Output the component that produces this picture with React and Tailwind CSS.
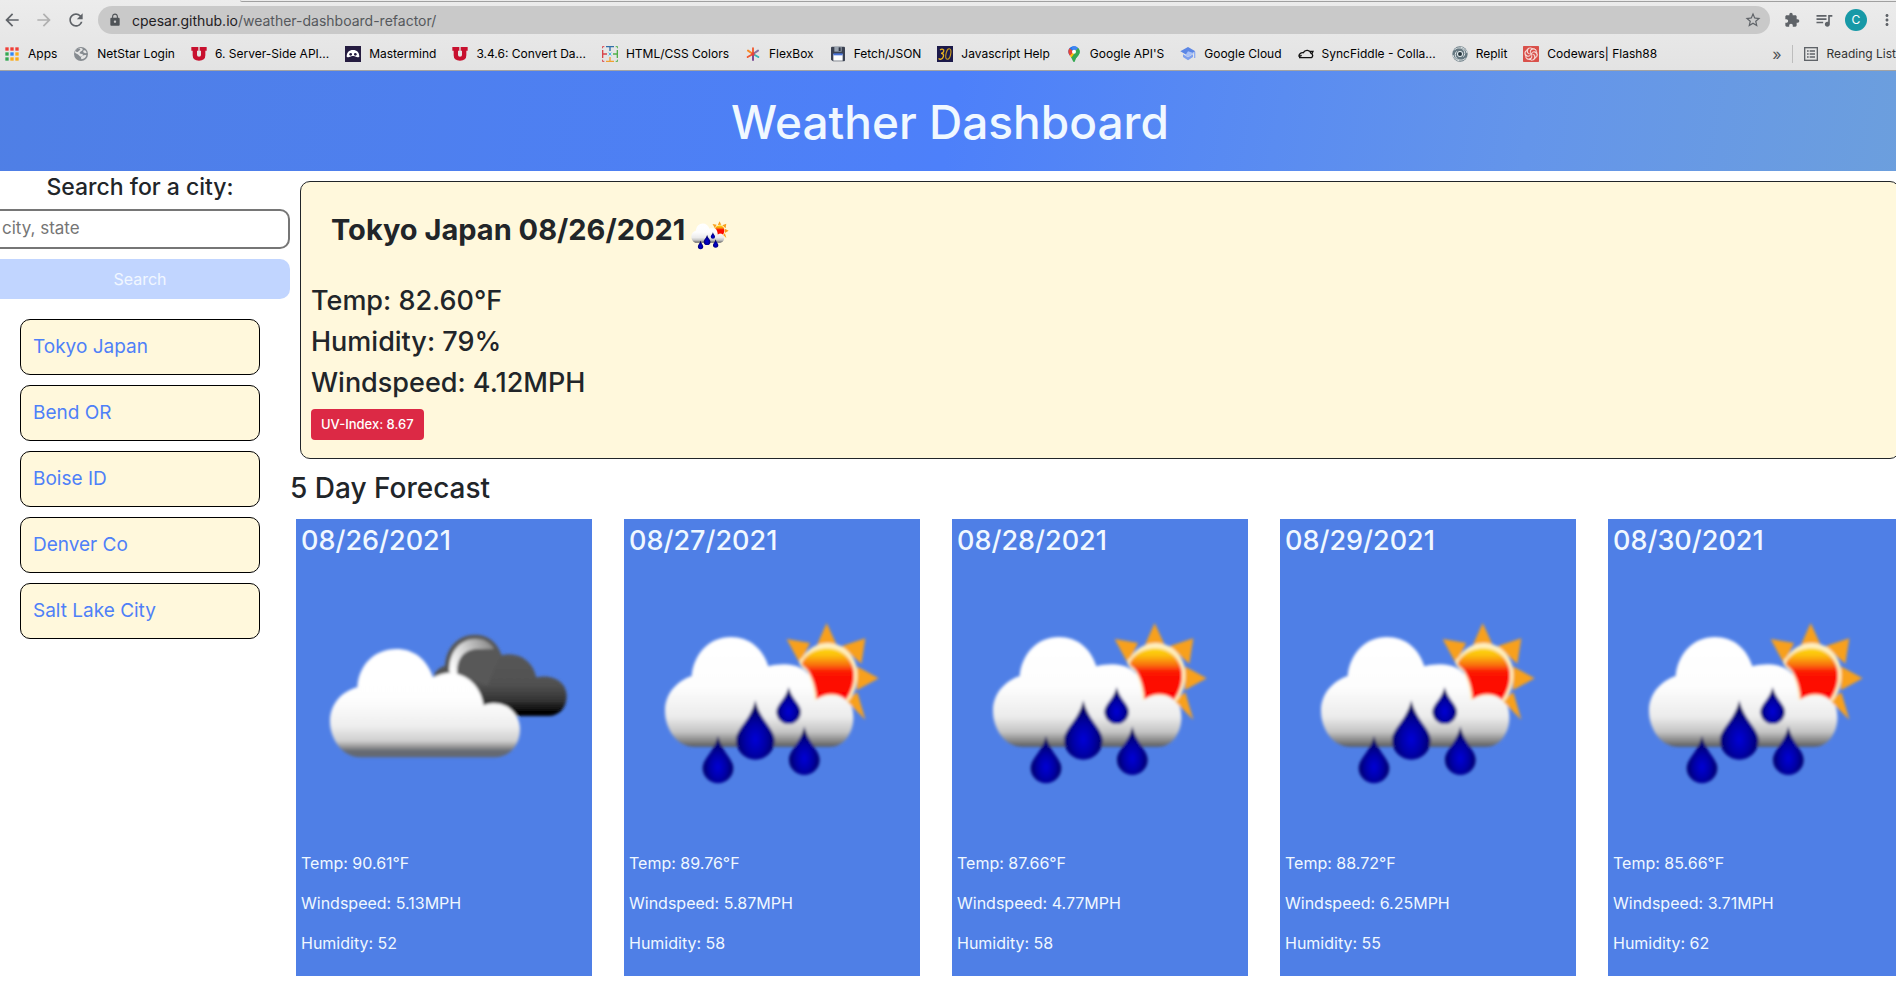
import { useId } from "react";
import {
  MdArrowBack,
  MdArrowForward,
  MdRefresh,
  MdLock,
  MdStarBorder,
  MdExtension,
  MdQueueMusic,
  MdMoreVert,
} from "react-icons/md";
import { SiCodewars } from "react-icons/si";

const Icon = ({ children, box = "0 0 48 48" }) => (
  <svg viewBox={box} className="size-4 shrink-0" aria-hidden="true">
    {children}
  </svg>
);

const APP_DOTS = ["#ef3e36", "#ef3e36", "#ef3e36", "#34a853", "#2f86f6", "#fbab17", "#34a853", "#fbab17", "#fbab17"];

const AppsIcon = () => (
  <Icon>
    {APP_DOTS.map((c, i) => (
      <rect key={i} x={4 + (i % 3) * 15} y={4 + Math.floor(i / 3) * 15} width="10" height="10" fill={c} />
    ))}
  </Icon>
);

const GlobeIcon = () => (
  <Icon>
    <circle cx="24" cy="24" r="21" fill="#868b90" />
    <path d="M24 6c6 1 7 5 3 8s-6 2-7 6 6 2 9 5-2 7-6 7-4-5-9-7-7-3-8-6C7 11 16 6 24 6z" fill="#e6e6e6" />
    <path d="M33 13c4-1 7 3 8 8-4 1-9 0-10-3s0-4 2-5zM27 30c5-2 9-4 13-2-1 6-7 11-14 12-3-2-3-8 1-10z" fill="#e6e6e6" />
    <path d="M13 9c4-2 8-2 9 0s-4 6-7 8-6 0-7-1 2-5 5-7z" fill="#868b90" />
  </Icon>
);

const UtahIcon = () => (
  <Icon>
    <path
      d="M1 3h21v11h-4v13q0 5 6 5t6-5V14h-4V3h21v11h-4v14q0 16-19 16T5 28V14H1z"
      fill="#c8102e"
    />
  </Icon>
);

const MastermindIcon = () => (
  <Icon>
    <rect width="48" height="48" fill="#251c40" />
    <path d="M5 32C5 19 12 12 24 12s19 7 19 20c-4 3-11 1-14-1-3-1-7-1-10 0-3 2-10 4-14 1z" fill="#fff" />
    <circle cx="17" cy="25" r="4" fill="#251c40" />
    <circle cx="31" cy="25" r="4" fill="#251c40" />
  </Icon>
);

const ColorsIcon = () => (
  <Icon>
    <g fill="none" strokeWidth="3">
      <path d="M12 2h24M24 2v13" stroke="#2f6ea8" strokeWidth="4" />
      <path d="M12 46h24M24 46V33" stroke="#f0a030" strokeWidth="4" />
      <path d="M2 12v24M2 24h13" stroke="#d8434a" strokeWidth="4" />
      <path d="M46 12v24M46 24H33" stroke="#4fb04a" strokeWidth="4" />
      <path d="M1 7V2h6M1 41v5h6" stroke="#d8434a" />
      <path d="M41 2h6v5M41 46h6v-5" stroke="#4fb04a" />
    </g>
    <path d="M21 21h6v6h-6z" fill="#49b9e8" />
    <path d="M18 18h3v3h-3zM27 18h3v3h-3zM18 27h3v3h-3zM27 27h3v3h-3z" fill="#9fd7ef" />
  </Icon>
);

const FlexIcon = () => (
  <Icon>
    <g strokeWidth="6" strokeLinecap="round">
      <path d="M24 24V7" stroke="#f0643c" />
      <path d="M24 24 9 14" stroke="#f58a28" />
      <path d="M24 24 39 14" stroke="#8a72a0" />
      <path d="M24 24 8 33" stroke="#f05a32" />
      <path d="M24 24 40 33" stroke="#35b5b8" />
      <path d="M24 24v18" stroke="#7b4c94" />
    </g>
    <circle cx="24" cy="24" r="5" fill="#e8413c" />
  </Icon>
);

const FloppyIcon = () => (
  <Icon>
    <path d="M3 5q0-3 3-3h36q3 0 3 3v38q0 3-3 3H9l-6-5z" fill="#3b4252" />
    <path d="M13 2h22v15H13z" fill="#9aa4b0" />
    <path d="M26 4h6v11h-6z" fill="#303747" />
    <path d="M10 24h28v20H10z" fill="#fff" />
    <path d="M10 22h28v6H10z" fill="#4a74d8" />
  </Icon>
);

const ThirtyIcon = () => (
  <Icon>
    <rect width="48" height="48" fill="#1c1a4a" />
    <path
      d="M9 12c6-5 13-2 11 4-1 4-5 6-8 6 6 0 9 4 7 10-2 8-11 10-14 5"
      fill="none"
      stroke="#e7b321"
      strokeWidth="4"
    />
    <ellipse cx="34" cy="24" rx="7" ry="16" transform="rotate(12 34 24)" fill="none" stroke="#c99a1e" strokeWidth="3.5" />
  </Icon>
);

const PinIcon = () => (
  <Icon>
    <path d="M24 1c4 0 8 1 11 4L12 29C9 25 7 21 7 17 7 8 14 1 24 1z" fill="#1a73e8" />
    <path d="M11 7 23 17 12 29C9 25 7 21 7 17c0-4 1-7 4-10z" fill="#ea4335" />
    <path d="M35 5c4 3 6 7 6 12 0 12-13 16-14 28-1 3-5 3-6 0-1-6-4-9-7-13z" fill="#34a853" />
    <path d="m12 29 18-21 3 14-17 13z" fill="#fbbc04" />
    <path d="m22 27 13-22c4 3 6 7 6 12 0 12-13 16-14 28-1 3-5 3-6 0-1-4-3-7-5-10z" fill="#34a853" />
    <path d="M20 2c6-2 12 0 16 4l-8 8-12-5z" fill="#4285f4" />
    <circle cx="24" cy="17" r="6" fill="#fff" />
  </Icon>
);

const CloudAcademyIcon = () => (
  <Icon>
    <path d="m24 3 22 13-22 13L1 16z" fill="#5b86e5" />
    <path d="m9 25 15 9 15-9v8l-15 10L9 33z" fill="#7ea0ee" />
    <path d="M42 18h4v18h-4z" fill="#8fadf2" />
    <path d="m24 16 18 6-18 11-8-5z" fill="#a9c1f7" />
  </Icon>
);

const SyncIcon = () => (
  <Icon>
    <path
      d="M37 16h8l-3 6M8 35h32c6-3 5-11-1-13C36 12 22 9 16 20 8 19 2 25 3 32M3 32l8-4M3 35h9"
      fill="none"
      stroke="#111"
      strokeWidth="4"
    />
  </Icon>
);

const ReplitIcon = () => (
  <Icon>
    <circle cx="24" cy="24" r="23" fill="#667881" />
    <g fill="none" stroke="#dfe5e7" strokeWidth="3">
      <path d="M6 13c7-9 22-10 29-1 5 7 4 15-1 20" />
      <path d="M42 35c-7 9-22 10-29 1-5-7-4-15 1-20" />
      <path d="M3 27c2 9 9 16 19 17M45 21C43 12 36 5 26 4" />
    </g>
    <circle cx="24" cy="24" r="8" fill="none" stroke="#dfe5e7" strokeWidth="3" />
    <circle cx="24" cy="24" r="5" fill="#26343b" />
  </Icon>
);

const CodewarsIcon = () => (
  <span className="size-4 shrink-0 bg-[#f6dedb] text-[#d9504a]">
    <SiCodewars className="size-4" />
  </span>
);

const ListIcon = () => (
  <Icon>
    <rect x="5" y="5" width="38" height="38" fill="none" stroke="#5f6368" strokeWidth="4" />
    <path d="M12 15h5M20 15h16M12 24h5M20 24h16M12 33h5M20 33h16" stroke="#5f6368" strokeWidth="4" />
  </Icon>
);

const BOOKMARKS = [
  ["Apps", AppsIcon],
  ["NetStar Login", GlobeIcon],
  ["6. Server-Side API...", UtahIcon],
  ["Mastermind", MastermindIcon],
  ["3.4.6: Convert Da...", UtahIcon],
  ["HTML/CSS Colors", ColorsIcon],
  ["FlexBox", FlexIcon],
  ["Fetch/JSON", FloppyIcon],
  ["Javascript Help", ThirtyIcon],
  ["Google API'S", PinIcon],
  ["Google Cloud", CloudAcademyIcon],
  ["SyncFiddle - Colla...", SyncIcon],
  ["Replit", ReplitIcon],
  ["Codewars| Flash88", CodewarsIcon],
];

function CloudsIcon({ className }) {
  const id = useId();
  return (
    <svg viewBox="33 168 858 858" className={className} role="img" aria-label="Broken clouds">
      <defs>
        <linearGradient id={id + "w"} gradientUnits="userSpaceOnUse" x1="0" y1="420" x2="0" y2="748">
          <stop offset="0" stopColor="#fff" />
          <stop offset=".45" stopColor="#fefefe" />
          <stop offset=".7" stopColor="#efefef" />
          <stop offset=".84" stopColor="#cfcfcf" />
          <stop offset=".9" stopColor="#909090" />
          <stop offset=".93" stopColor="#666b74" />
          <stop offset="1" stopColor="#62666e" />
        </linearGradient>
        <linearGradient id={id + "d"} gradientUnits="userSpaceOnUse" x1="0" y1="380" x2="0" y2="625">
          <stop offset="0" stopColor="#5a5a5a" />
          <stop offset=".6" stopColor="#505050" />
          <stop offset=".8" stopColor="#333" />
          <stop offset=".92" stopColor="#050505" />
          <stop offset="1" stopColor="#000" />
        </linearGradient>
        <linearGradient id={id + "r"} gradientUnits="userSpaceOnUse" x1="480" y1="480" x2="630" y2="410">
          <stop offset="0" stopColor="#fff" />
          <stop offset=".4" stopColor="#d0d0d0" />
          <stop offset="1" stopColor="#777" />
        </linearGradient>
        <filter id={id + "b"} x="-10%" y="-10%" width="120%" height="120%">
          <feGaussianBlur stdDeviation="5" />
        </filter>
      </defs>
      <g filter={`url(#${id}b)`}>
        <path
          d="M432 505C432 490 445 476 465 470 468 415 505 377 555 377c38 0 67 22 80 62 45-12 92 12 104 66 44-10 91 10 91 56 0 36-22 60-55 60H640L520 560z"
          fill={`url(#${id}d)`}
        />
        <path
          d="M478 490c-3-60 32-100 78-100 26 0 43 9 56 30-50 0-70-2-90 18-18 18-22 36-20 60z"
          fill={`url(#${id}r)`}
        />
        <path d="M503 498c-8-50 22-80 66-78 30 2 56 8 64 16l-40 94z" fill="#585858" />
        <path
          d="M210 745c-50 0-90-52-90-108 0-50 34-90 82-102 4-66 50-115 117-115 52 0 92 30 110 85 20-10 44-18 66-12 46 10 78 45 86 96 60-22 109 20 109 72 0 50-34 84-74 84z"
          fill={`url(#${id}w)`}
        />
      </g>
    </svg>
  );
}

const DROPS = [
  [404, 574, 752, 58],
  [504, 534, 645, 37],
  [292, 680, 823, 46],
  [551, 652, 798, 46],
];

// A drop with its tip at `top`, its round end at `bottom` and half-width r.
function dropPath([x, top, bottom, r]) {
  const cy = bottom - r;
  return `M${x} ${top}C${x + r * 0.25} ${top + (cy - top) * 0.5} ${x + r} ${cy - r * 0.6} ${x + r} ${cy}A${r} ${r} 0 0 1 ${x - r} ${cy}C${x - r} ${cy - r * 0.6} ${x - r * 0.25} ${top + (cy - top) * 0.5} ${x} ${top}z`;
}

function RainIcon({ className }) {
  const id = useId();
  return (
    <svg viewBox="25 168 858 858" className={className} role="img" aria-label="Rain with sun">
      <defs>
        <linearGradient id={id + "w"} gradientUnits="userSpaceOnUse" x1="0" y1="385" x2="0" y2="715">
          <stop offset="0" stopColor="#fff" />
          <stop offset=".45" stopColor="#fdfdfd" />
          <stop offset=".72" stopColor="#ececec" />
          <stop offset=".86" stopColor="#c4c4c4" />
          <stop offset=".95" stopColor="#808080" />
          <stop offset="1" stopColor="#555" />
        </linearGradient>
        <linearGradient id={id + "s"} gradientUnits="userSpaceOnUse" x1="0" y1="420" x2="0" y2="575">
          <stop offset="0" stopColor="#fdd40c" />
          <stop offset=".12" stopColor="#fcc010" />
          <stop offset=".32" stopColor="#f86a10" />
          <stop offset=".44" stopColor="#fc1404" />
          <stop offset="1" stopColor="#fe0000" />
        </linearGradient>
        <radialGradient id={id + "d"} cx=".5" cy=".66" r=".55">
          <stop offset="0" stopColor="#0202d8" />
          <stop offset=".5" stopColor="#0000a4" />
          <stop offset="1" stopColor="#02005a" />
        </radialGradient>
        <filter id={id + "b"} x="-10%" y="-10%" width="120%" height="120%">
          <feGaussianBlur stdDeviation="5" />
        </filter>
      </defs>
      <g filter={`url(#${id}b)`}>
        <path
          d="M220 713c-50 0-87-52-87-108 0-50 34-88 80-104 6-66 52-117 118-117 54 0 96 34 112 88 60-14 108-4 132 40l60 40c50 2 65 40 63 80-3 48-34 81-68 81z"
          fill={`url(#${id}w)`}
        />
        <g fill="#f8a01c">
          <path d="M618 342 648 408H589z" />
          <path d="M498 390 568 402 538 464z" />
          <path d="M734 388 722 464 662 412z" />
          <path d="M774 508 708 544V472z" />
          <path d="M734 632 676 574 710 550z" />
        </g>
        <path
          d="M560 488C534 470 530 455 545 446 565 415 592 402 622 402c50 0 88 42 88 94 0 34-10 62-28 82-30-26-70-20-100-4-2-34-10-62-22-86z"
          fill="#fff0c0"
        />
        <path
          d="M562 484c-10-12-22-14-18-24 14-28 44-42 76-42 46 0 80 36 80 80 0 30-10 54-24 74-28-22-60-20-88-2-2-34-12-62-26-86z"
          fill={`url(#${id}s)`}
        />
        {DROPS.map((d) => (
          <path key={d[0]} d={dropPath(d)} fill={`url(#${id}d)`} />
        ))}
      </g>
    </svg>
  );
}

const CITIES = ["Tokyo Japan", "Bend OR", "Boise ID", "Denver Co", "Salt Lake City"];

const FORECAST = [
  { date: "08/26/2021", Art: CloudsIcon, temp: "90.61", wind: "5.13", humidity: 52 },
  { date: "08/27/2021", Art: RainIcon, temp: "89.76", wind: "5.87", humidity: 58 },
  { date: "08/28/2021", Art: RainIcon, temp: "87.66", wind: "4.77", humidity: 58 },
  { date: "08/29/2021", Art: RainIcon, temp: "88.72", wind: "6.25", humidity: 55 },
  { date: "08/30/2021", Art: RainIcon, temp: "85.66", wind: "3.71", humidity: 62 },
];

function BrowserBar() {
  return (
    <div className="border-b border-[#a3a3a3] bg-linear-to-b from-[#ececec] to-[#e3e3e3] text-[#5f6368]">
      <div className="ml-60 h-0.5 rounded-bl border-b border-[#a0a0a0]" />
      <div className="flex h-9 items-center">
        <button aria-label="Back" className="-ml-1 flex w-8 shrink-0 justify-center">
          <MdArrowBack className="size-5" />
        </button>
        <button aria-label="Forward" className="flex w-8 shrink-0 justify-center text-[#b0b0b0]">
          <MdArrowForward className="size-5" />
        </button>
        <button aria-label="Reload" className="flex w-8 shrink-0 justify-center">
          <MdRefresh className="size-5" />
        </button>
        <div className="ml-1.5 flex h-7 flex-1 items-center rounded-full bg-[#c9c9c9] pr-2 pl-2.5 text-[14px]">
          <MdLock className="size-3.5 text-[#4f5357]" />
          <label htmlFor="address" className="ml-2.5 text-[#1f2023]">
            cpesar.github.io
          </label>
          <input
            id="address"
            className="min-w-0 flex-1 bg-transparent text-[#55585c] outline-none"
            defaultValue="/weather-dashboard-refactor/"
          />
          <button aria-label="Bookmark this page">
            <MdStarBorder className="size-[18px]" />
          </button>
        </div>
        <div className="flex items-center pl-1.5">
          <button aria-label="Extensions" className="flex w-8 justify-center">
            <MdExtension className="size-4" />
          </button>
          <button aria-label="Media" className="flex w-8 justify-center">
            <MdQueueMusic className="size-5" />
          </button>
          <button aria-label="Profile" className="flex w-8 justify-center">
            <span className="flex size-[22px] items-center justify-center rounded-full bg-[#1799a7] text-[12px] text-white">
              C
            </span>
          </button>
          <button aria-label="Menu" className="flex w-6 justify-end">
            <MdMoreVert className="size-[18px]" />
          </button>
        </div>
      </div>
      <nav aria-label="Bookmarks" className="flex h-8 items-center gap-4 pl-1 text-[12px] whitespace-nowrap text-black">
        {BOOKMARKS.map(([label, Art]) => (
          <a key={label} href="#" className="flex items-center gap-2">
            <Art />
            {label}
          </a>
        ))}
        <div className="ml-auto flex items-center">
          <button aria-label="More bookmarks" className="mr-2.5 text-[16px] text-[#4f5357]">
            »
          </button>
          <a href="#" className="flex items-center gap-2 border-l border-[#bdbdbd] pl-2.5 text-[#333]">
            <ListIcon />
            Reading List
          </a>
        </div>
      </nav>
    </div>
  );
}

export default function App() {
  return (
    <div className="min-h-screen overflow-hidden bg-white font-['Inter',sans-serif] text-[#212529]">
      <BrowserBar />
      {/* The page is wider than the window and is scrolled slightly to the right. */}
      <div className="-mr-3.5 -ml-2.5">
        <header className="flex h-[100px] items-center justify-center bg-linear-[100deg,#4f7fe5,#4d80fa_50%,#6495ea_80%,#6c9fdd] pt-0.5 text-[aliceblue]">
          <h1 className="text-[46px] leading-none font-medium">Weather Dashboard</h1>
        </header>
        <div className="flex">
          <aside className="w-[300px] shrink-0">
            <form onSubmit={(e) => e.preventDefault()} className="flex flex-col">
              <label htmlFor="city" className="pt-0.5 text-center text-[23px] leading-7 font-medium">
                Search for a city:
              </label>
              <input
                id="city"
                placeholder="city, state"
                className="mt-2 h-10 rounded-[10px] border-2 border-[#767676] px-2.5 pb-0.5 text-[17px] placeholder:text-[#757575]"
              />
              <button disabled className="mt-2.5 h-10 rounded-[10px] bg-[#c1d5ff] text-[16px] text-[#f1f7ff]">
                Search
              </button>
            </form>
            <ul className="mt-5 flex flex-col gap-2.5 px-[30px]">
              {CITIES.map((city) => (
                <li key={city}>
                  <button className="h-14 w-full rounded-[10px] border border-black bg-[#fff8dc] px-3 text-left text-[19px] text-[#4e80f8]">
                    {city}
                  </button>
                </li>
              ))}
            </ul>
          </aside>
          <main className="min-w-0 flex-1">
            <section className="m-2.5 rounded-[10px] border border-[#212529] bg-[#fff8dc] p-2.5 pb-[18px]">
              <div className="flex h-[88px] items-center px-5 pb-3">
                <h2 className="text-[29px] leading-9 font-bold">Tokyo Japan 08/26/2021</h2>
                <RainIcon className="mt-3 size-[50px]" />
              </div>
              <div className="text-[27px] leading-[41px] font-medium">
                <p>Temp: 82.60°F</p>
                <p>Humidity: 79%</p>
                <p>Windspeed: 4.12MPH</p>
              </div>
              <p className="mt-1.5 flex">
                <span className="rounded bg-[#dc2945] px-2.5 text-[13px] leading-[31px] font-medium text-white">
                  UV-Index: 8.67
                </span>
              </p>
            </section>
            <h2 className="text-[28px] leading-[38px] font-medium">5 Day Forecast</h2>
            <div className="mt-3 grid grid-cols-5 gap-8 px-1.5">
              {FORECAST.map(({ date, Art, temp, wind, humidity }) => (
                <article key={date} className="bg-[#4f7fe6] p-[5px] text-[16px] leading-6 text-[aliceblue]">
                  <h3 className="mb-2 text-[27px] leading-[33px] font-medium">{date}</h3>
                  <Art className="aspect-square w-full" />
                  <p className="mb-4">Temp: {temp}°F</p>
                  <p className="mb-4">Windspeed: {wind}MPH</p>
                  <p className="mb-4">Humidity: {humidity}</p>
                </article>
              ))}
            </div>
          </main>
        </div>
      </div>
    </div>
  );
}
